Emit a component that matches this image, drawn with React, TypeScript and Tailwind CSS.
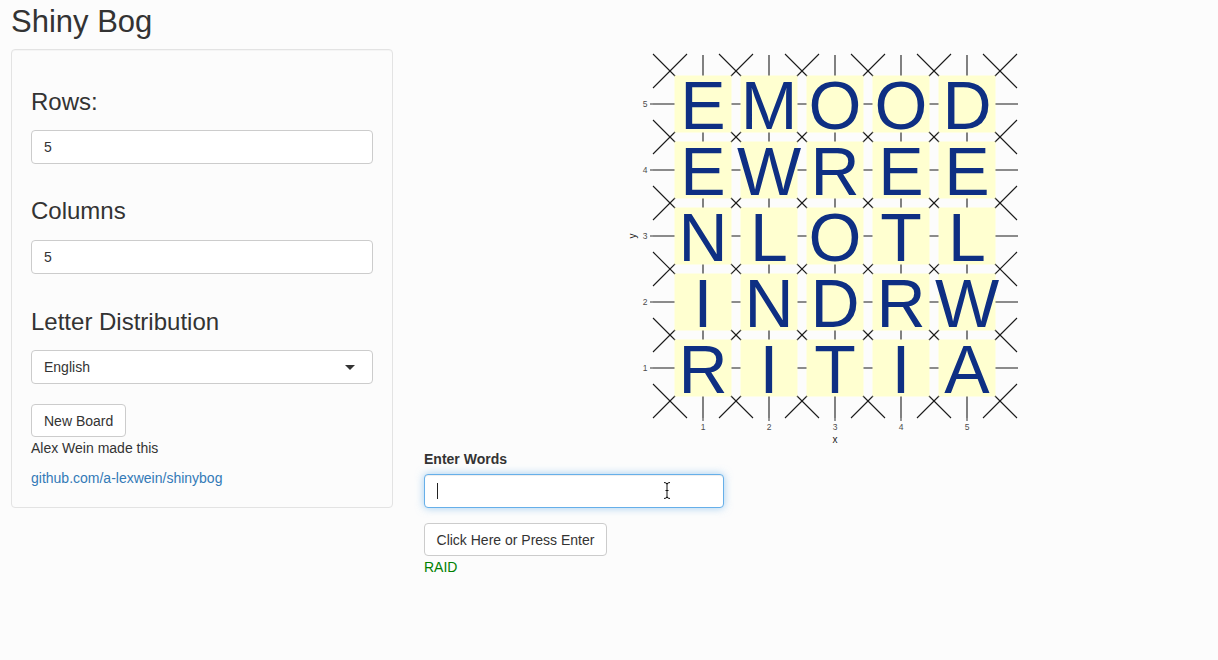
import React from "react";

const board = [
  ["E", "M", "O", "O", "D"],
  ["E", "W", "R", "E", "E"],
  ["N", "L", "O", "T", "L"],
  ["I", "N", "D", "R", "W"],
  ["R", "I", "T", "I", "A"],
];

// page coords: x=1 at 703, y=5 at 104, 66px per unit
const xs = [703, 769, 835, 901, 967];
const ys = [104, 170, 236, 302, 368];
const crossX = [670, 736, 802, 868, 934, 1000];
const crossY = [71, 137, 203, 269, 335, 401];

function BoardPlot() {
  return (
    <svg width="400" height="400" viewBox="625 49 400 400" className="block">
      {/* grid lines */}
      {ys.map((y) => (
        <line key={`h${y}`} x1={653} x2={1018} y1={y} y2={y} stroke="#1a1a1a" strokeWidth={1.1} />
      ))}
      {xs.map((x) => (
        <line key={`v${x}`} x1={x} x2={x} y1={55} y2={418} stroke="#1a1a1a" strokeWidth={1.1} />
      ))}
      {/* diagonal crosses */}
      {crossX.map((cx) =>
        crossY.map((cy) => (
          <g key={`c${cx}-${cy}`} stroke="#1a1a1a" strokeWidth={1.1}>
            <line x1={cx - 17} y1={cy - 17} x2={cx + 17} y2={cy + 17} />
            <line x1={cx - 17} y1={cy + 17} x2={cx + 17} y2={cy - 17} />
          </g>
        ))
      )}
      {/* tiles + letters */}
      {board.map((row, r) =>
        row.map((ch, c) => (
          <g key={`t${r}-${c}`}>
            <rect x={xs[c] - 28.5} y={ys[r] - 28.5} width={57} height={57} fill="#ffffd0" />
            <text
              x={xs[c]}
              y={ys[r] + 25}
              textAnchor="middle"
              fontSize={68}
              fill="#0e2f83"
              fontFamily="'Liberation Sans', Arial, sans-serif"
            >
              {ch}
            </text>
          </g>
        ))
      )}
      {/* axis ticks + labels */}
      {ys.map((y, i) => (
        <g key={`yl${y}`}>
          <line x1={650} x2={653} y1={y} y2={y} stroke="#333" strokeWidth={1} />
          <text x={645} y={y + 3} textAnchor="middle" fontSize={8.5} fill="#4d4d4d" fontFamily="'Liberation Sans', Arial, sans-serif">
            {5 - i}
          </text>
        </g>
      ))}
      {xs.map((x, i) => (
        <g key={`xl${x}`}>
          <line x1={x} x2={x} y1={418} y2={421} stroke="#333" strokeWidth={1} />
          <text x={x} y={430} textAnchor="middle" fontSize={8.5} fill="#4d4d4d" fontFamily="'Liberation Sans', Arial, sans-serif">
            {i + 1}
          </text>
        </g>
      ))}
      <text x={835} y={443} textAnchor="middle" fontSize={10} fill="#1a1a1a" fontFamily="'Liberation Sans', Arial, sans-serif">
        x
      </text>
      <text
        x={636}
        y={236}
        textAnchor="middle"
        fontSize={10}
        fill="#1a1a1a"
        fontFamily="'Liberation Sans', Arial, sans-serif"
        transform="rotate(-90 636 236)"
      >
        y
      </text>
    </svg>
  );
}

function FieldLabel({ children, top }: { children: React.ReactNode; top: string }) {
  return (
    <h3 className={`${top} mb-[15px] text-[24px] leading-[26.4px] font-medium text-[#333]`}>{children}</h3>
  );
}

export default function App() {
  return (
    <div
      className="min-h-[660px] bg-[#fcfcfc] text-[14px] leading-[20px] text-[#333]"
      style={{ fontFamily: "'Liberation Sans', Arial, Helvetica, sans-serif" }}
    >
      <div className="px-[11px] pt-[5px]">
        <h1 className="text-[31px] leading-[33px] font-medium text-[#333]">Shiny Bog</h1>

        <div className="mt-[11px] flex items-start gap-[31px]">
          {/* sidebar */}
          <div className="w-[382px] shrink-0 rounded-[4px] border border-[#e3e3e3] bg-[#fcfcfc] px-[19px] pb-[19px] pt-[19px] shadow-[inset_0_1px_1px_rgba(0,0,0,0.03)]">
            <FieldLabel top="mt-[20px]">Rows:</FieldLabel>
            <div className="flex h-[34px] items-center rounded-[4px] border border-[#ccc] bg-white px-[12px]">5</div>

            <FieldLabel top="mt-[34px]">Columns</FieldLabel>
            <div className="flex h-[34px] items-center rounded-[4px] border border-[#ccc] bg-white px-[12px]">5</div>

            <FieldLabel top="mt-[35px]">Letter Distribution</FieldLabel>
            <div className="flex h-[34px] items-center justify-between rounded-[4px] border border-[#ccc] bg-white pl-[12px] pr-[17px]">
              <span>English</span>
              <span className="h-0 w-0 border-x-[5px] border-t-[5px] border-x-transparent border-t-[#333]" />
            </div>

            <button className="mt-[20px] flex h-[33px] items-center rounded-[4px] border border-[#ccc] bg-white px-[12px] text-[#333]">
              New Board
            </button>
            <div className="mt-[1px]">Alex Wein made this</div>
            <a className="mt-[10px] block text-[#337ab7]">github.com/a-lexwein/shinybog</a>
          </div>

          {/* main */}
          <div className="flex flex-col">
            <div className="ml-[201px]">
              <BoardPlot />
            </div>
            <div className="font-bold">Enter Words</div>
            <div className="relative mt-[5px] h-[34px] w-[300px] rounded-[4px] border border-[#66afe9] bg-white shadow-[inset_0_1px_1px_rgba(0,0,0,0.075),0_0_8px_rgba(102,175,233,0.6)]">
              <span className="absolute left-[12px] top-[8px] h-[16px] w-[1px] bg-[#222]" />
              <svg className="absolute left-[238px] top-[7px]" width="8" height="17" viewBox="0 0 8 17">
                <path d="M1 0.5 Q4 0.5 4 2.5 Q4 0.5 7 0.5 M4 2.5 V14.5 M1 16.5 Q4 16.5 4 14.5 Q4 16.5 7 16.5 M2.5 8.5 H5.5" stroke="#111" strokeWidth="1" fill="none" />
              </svg>
            </div>
            <button className="mt-[15px] flex h-[33px] w-[183px] items-center justify-center rounded-[4px] border border-[#ccc] bg-white text-[#333]">
              Click Here or Press Enter
            </button>
            <div className="mt-[1px] text-[#008000]">RAID</div>
          </div>
        </div>
      </div>
    </div>
  );
}
